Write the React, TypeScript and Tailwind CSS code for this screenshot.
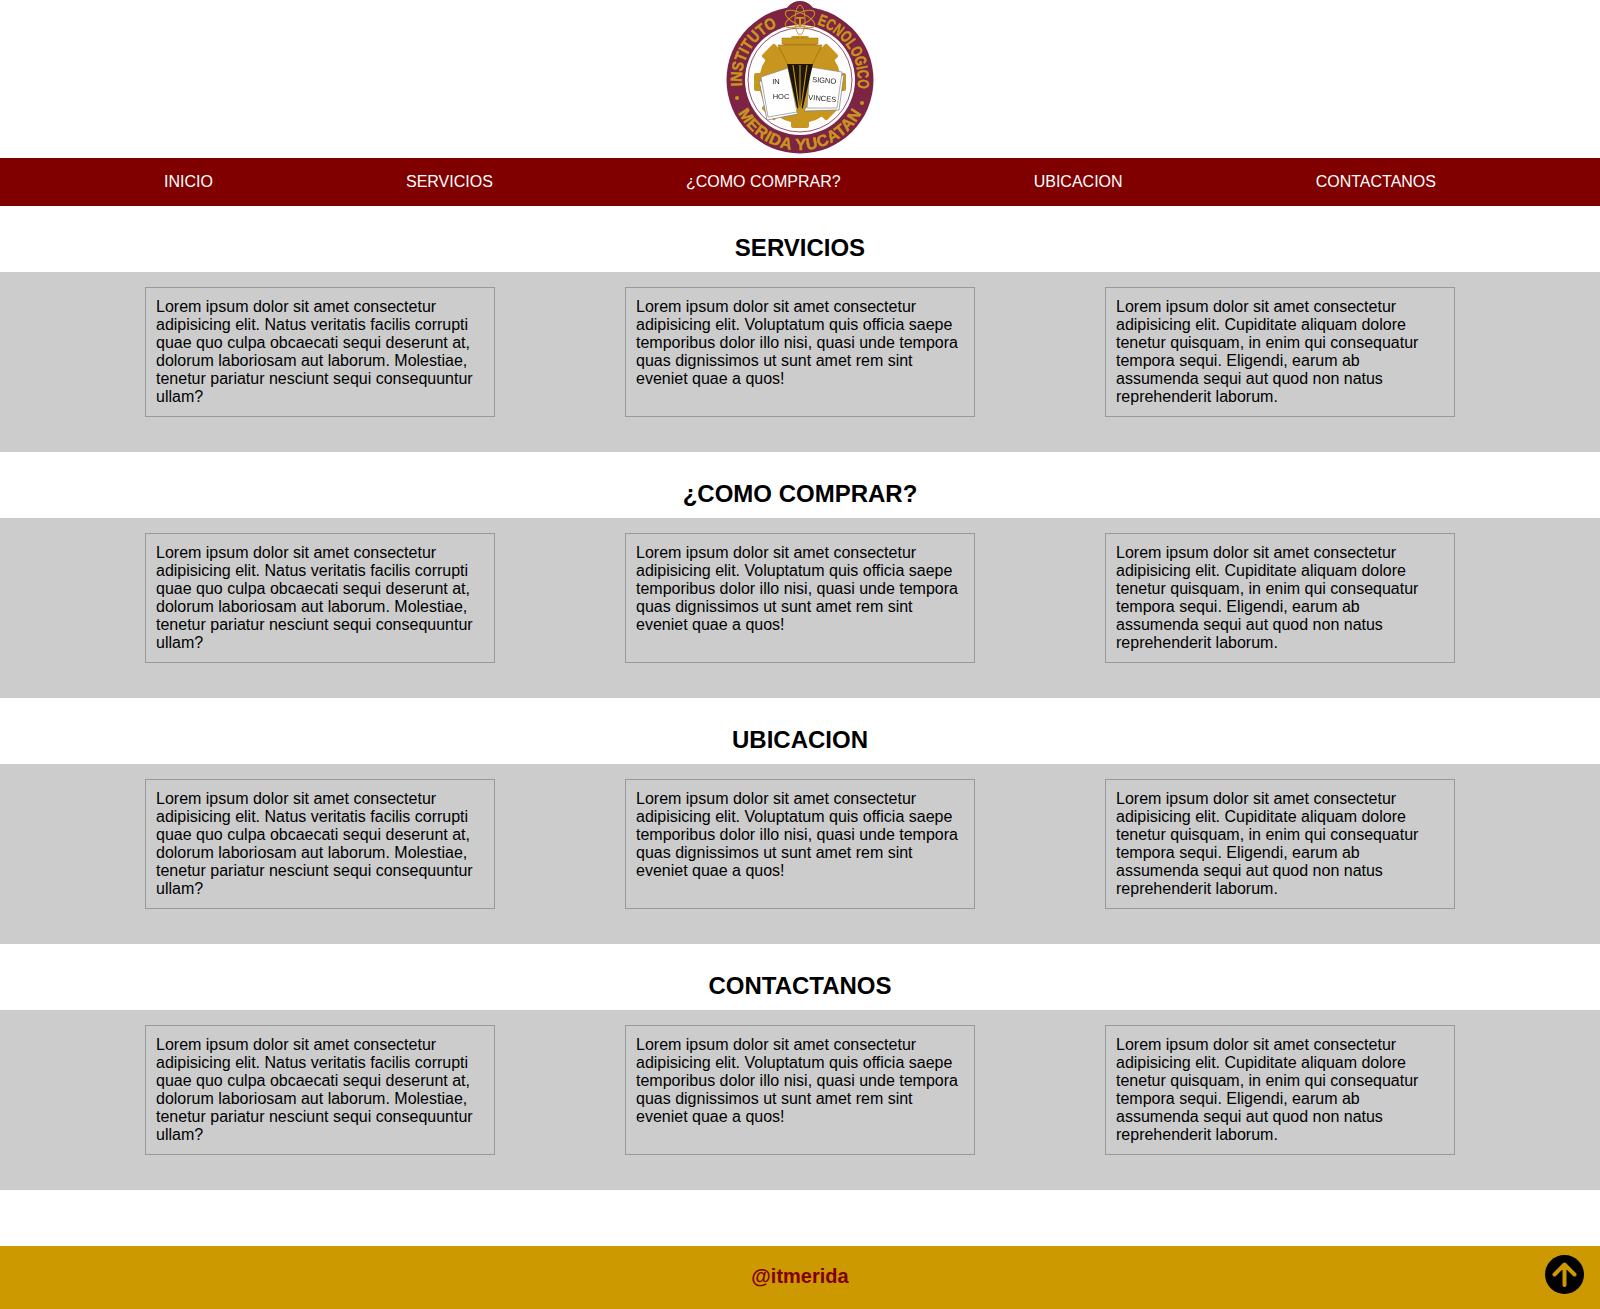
const rows = ["SERVICIOS", "¿COMO COMPRAR?", "UBICACION", "CONTACTANOS"];

const cards = [
  "Lorem ipsum dolor sit amet consectetur adipisicing elit. Natus veritatis facilis corrupti quae quo culpa obcaecati sequi deserunt at, dolorum laboriosam aut laborum. Molestiae, tenetur pariatur nesciunt sequi consequuntur ullam?",
  "Lorem ipsum dolor sit amet consectetur adipisicing elit. Voluptatum quis officia saepe temporibus dolor illo nisi, quasi unde tempora quas dignissimos ut sunt amet rem sint eveniet quae a quos!",
  "Lorem ipsum dolor sit amet consectetur adipisicing elit. Cupiditate aliquam dolore tenetur quisquam, in enim qui consequatur tempora sequi. Eligendi, earum ab assumenda sequi aut quod non natus reprehenderit laborum.",
];

const gold = "#c8961e";
const wine = "#7d2444";

function Logo() {
  return (
    <svg width="160" height="158" viewBox="0 0 160 158" className="block blur-[0.5px]">
      <defs>
        <path id="logo-left" d="M 22.3 86 A 58 58 0 0 1 57.3 26.6" />
        <path id="logo-right" d="M 97 24.5 A 58 58 0 0 1 137.4 88" />
        <path id="logo-bottom" d="M 18.2 112.9 A 70 70 0 0 0 141.8 112.9" />
      </defs>
      {/* outer ring */}
      <circle cx="80" cy="80" r="73.5" fill={wine} />
      <circle cx="80" cy="17" r="16" fill={wine} />
      <circle cx="80" cy="80" r="55" fill="#fff" />
      <circle cx="80" cy="80" r="52" fill="none" stroke={wine} strokeWidth="0.8" />
      {/* atom */}
      <g fill="none" stroke={gold} strokeWidth="1">
        <ellipse cx="80" cy="19" rx="16" ry="6" transform="rotate(25 80 19)" />
        <ellipse cx="80" cy="19" rx="16" ry="6" transform="rotate(-25 80 19)" />
        <ellipse cx="80" cy="20" rx="5" ry="15" />
      </g>
      <text x="80" y="27" textAnchor="middle" fontFamily="Liberation Sans, sans-serif" fontWeight="700" fontSize="14" fill={gold}>T</text>
      <g fontFamily="Liberation Sans, sans-serif" fontWeight="700" fontSize="16" fill={gold} stroke={gold} strokeWidth="0.5">
        <text>
          <textPath href="#logo-left" textLength="74" lengthAdjust="spacingAndGlyphs">INSTITUTO</textPath>
        </text>
        <text>
          <textPath href="#logo-right" textLength="82" lengthAdjust="spacingAndGlyphs">ECNOLOGICO</textPath>
        </text>
        <text>
          <textPath href="#logo-bottom" textLength="151" lengthAdjust="spacing">MERIDA YUCATAN</textPath>
        </text>
      </g>
      <circle cx="17" cy="98" r="2" fill={gold} />
      <circle cx="142" cy="103" r="2" fill={gold} />
      {/* gear */}
      <circle cx="80" cy="82" r="41" fill={gold} />
      <g fill={gold}>
        <rect x="71" y="36" width="18" height="92" rx="2" />
        <rect x="71" y="36" width="18" height="92" rx="2" transform="rotate(45 80 82)" />
        <rect x="71" y="36" width="18" height="92" rx="2" transform="rotate(90 80 82)" />
        <rect x="71" y="36" width="18" height="92" rx="2" transform="rotate(135 80 82)" />
      </g>
      {/* book */}
      <path d="M39 80 L47 120 L78 114 L78 108 Z" fill="#fff" stroke="#777" strokeWidth="0.7" />
      <path d="M41 77 L68 68 L77 112 L48 117 Z" fill="#fff" stroke="#888" strokeWidth="0.7" />
      <path d="M124 74 L119 110 L84 111 L90 100 Z" fill="#fff" stroke="#777" strokeWidth="0.7" />
      <path d="M90 67 L122 72 L117 108 L87 108 Z" fill="#fff" stroke="#888" strokeWidth="0.7" />
      <g fontFamily="Liberation Sans, sans-serif" fontSize="7.5" fill="#222" textAnchor="middle">
        <text x="56" y="84">IN</text>
        <text x="61" y="99">HOC</text>
        <text x="104" y="83" transform="rotate(5 104 83)">SIGNO</text>
        <text x="102" y="101" transform="rotate(5 102 101)">VINCES</text>
      </g>
      {/* torch */}
      <path d="M58 45 H102 L92 65 H68 Z" fill={gold} stroke="#7a5a10" strokeWidth="0.5" />
      <rect x="62" y="38" width="36" height="6" fill={gold} stroke="#a07a18" strokeWidth="0.5" />
      <path d="M67 64 H93 L82 112 H78 Z" fill="#1d1606" />
      <path d="M73 65 L79 108 M80 65 V108 M87 65 L81 108" stroke={gold} strokeWidth="1.1" />
      <circle cx="80" cy="111" r="3.5" fill={gold} />
      <rect x="78" y="111" width="4" height="12" rx="2" fill={gold} />
    </svg>
  );
}

function Section({ title }: { title: string }) {
  return (
    <section>
      <h2 className="h-[66px] pt-[28px] text-center text-2xl leading-[27px] font-bold text-black">{title}</h2>
      <div className="h-[180px] bg-[#cccccc] pt-[15px]">
        <div className="mx-auto grid w-[1440px] grid-cols-3">
          {cards.map((text, i) => (
            <div key={i} className="mx-auto h-[130px] w-[350px] border border-[#999999] p-[10px] text-base leading-[18px] text-black">
              {text}
            </div>
          ))}
        </div>
      </div>
    </section>
  );
}

export default function App() {
  return (
    <div className="font-['Liberation_Sans',Arial,sans-serif] bg-white">
      {/* Logo */}
      <header className="flex h-[158px] justify-center">
        <Logo />
      </header>

      {/* Nav */}
      <nav className="flex h-[48px] items-center justify-between bg-[#800000] px-[164px] text-base text-white">
        <a href="#inicio">INICIO</a>
        <a href="#servicios">SERVICIOS</a>
        <a href="#comprar">¿COMO COMPRAR?</a>
        <a href="#ubicacion">UBICACION</a>
        <a href="#contactanos">CONTACTANOS</a>
      </nav>

      {rows.map((title) => (
        <Section key={title} title={title} />
      ))}

      {/* Footer */}
      <footer className="relative mt-[56px] flex h-[63px] items-center justify-center bg-[#cc9900] pb-[3px] text-xl font-bold text-[#800000]">
        @itmerida
        <a href="#inicio" className="absolute top-[9px] right-[16px] flex h-[39px] w-[39px] items-center justify-center rounded-full bg-black">
          <svg width="39" height="39" viewBox="0 0 39 39" fill="none" stroke="#cc9900" strokeWidth="4" strokeLinecap="round" strokeLinejoin="round">
            <path d="M19.5 30V10M9.5 19.5L19.5 9.5L29.5 19.5" />
          </svg>
        </a>
      </footer>
    </div>
  );
}
